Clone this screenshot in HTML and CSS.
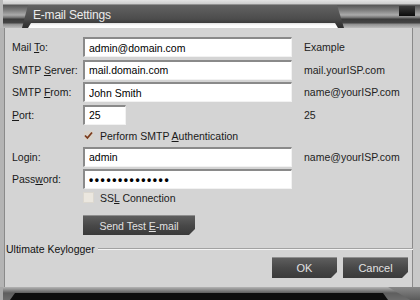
FILE: index.html
```html
<!DOCTYPE html>
<html lang="en">
<head>
    <meta charset="UTF-8">
    <title>E-mail Settings</title>
    <link rel="stylesheet" href="styles.css">
</head>
<body>
    <div class="window">

        <!-- Title bar with the dark tab -->
        <div class="titlebar">
            <div class="tb-left"></div>
            <div class="tab">
                <div class="tab-title">E-mail Settings</div>
                <div class="tab-edge"></div>
            </div>
            <div class="tb-right"><div class="tb-knob"></div></div>
        </div>

        <div class="content">
            <div class="form">
                <label for="mailTo">Mail <u>T</u>o:</label>
                <input class="field" id="mailTo" type="text" value="admin@domain.com">
                <span class="hint">Example</span>

                <label for="smtpServer">SMTP <u>S</u>erver:</label>
                <input class="field" id="smtpServer" type="text" value="mail.domain.com">
                <span class="hint">mail.yourISP.com</span>

                <label for="smtpFrom">SMTP <u>F</u>rom:</label>
                <input class="field" id="smtpFrom" type="text" value="John Smith">
                <span class="hint">name@yourISP.com</span>

                <label for="port"><u>P</u>ort:</label>
                <input class="field port" id="port" type="text" value="25">
                <span class="hint">25</span>

                <div class="check-row">
                    <span class="check checked">
                        <svg width="9" height="9" viewBox="0 0 9 9"><path d="M1 4.5 L3.4 7 L8 1.5" fill="none" stroke="#7a3a1c" stroke-width="1.8"/></svg>
                    </span>
                    <span>Perform SMTP <u>A</u>uthentication</span>
                </div>

                <label for="login">Lo<u>g</u>in:</label>
                <input class="field" id="login" type="text" value="admin">
                <span class="hint">name@yourISP.com</span>

                <label for="password">Pass<u>w</u>ord:</label>
                <input class="field pass" id="password" type="password" value="12345678901234">
                <span></span>

                <div class="check-row">
                    <span class="check"></span>
                    <span>SS<u>L</u> Connection</span>
                </div>

                <div class="test-row">
                    <button class="dark-btn test-btn">Send Test <u>E</u>-mail</button>
                </div>
            </div>

            <div class="group">
                <span>Ultimate Keylogger</span>
                <div class="rule"></div>
            </div>

            <div class="actions">
                <button class="dark-btn action-btn">OK</button>
                <button class="dark-btn action-btn">Cancel</button>
            </div>
        </div>

        <!-- Bottom frame -->
        <div class="bottom-frame">
            <div class="bottom-bar"></div>
            <div class="bottom-corner"></div>
        </div>

    </div>
</body>
</html>
```

FILE: styles.css
```css
* {
    margin: 0;
    padding: 0;
    box-sizing: border-box;
}

body {
    font-family: 'Liberation Sans', Arial, sans-serif;
    font-size: 10.5px;
    color: #1a1a1a;
    background-color: #d4d4d4;
}

.window {
    width: 420px;
    height: 300px;
    display: flex;
    flex-direction: column;
    overflow: hidden;
}

/* Title bar */
.titlebar {
    height: 28px;
    display: flex;
    background: linear-gradient(to bottom, #e4e4e4 0, #cdcdcd 4px, #555 5px, #7c7c7c 10px, #ababab 15px, #6a6a6a 18px, #3a3a3a 19px, #454545 23px, #8c8c8c 24px, #bdbdbd 28px);
}

.tb-left {
    width: 22px;
    border-left: 3px solid #b9b9b9;
}

.tab {
    width: 322px;
    margin-top: 5px;
    display: flex;
    flex-direction: column;
    background: linear-gradient(to bottom, #626262, #4c4c4c 14px, #3b3b3b 18px, #2e2e2e);
    clip-path: polygon(6px 0, calc(100% - 7px) 0, 100% 100%, 0 100%);
}

.tab-title {
    height: 18px;
    padding-left: 11px;
    padding-top: 3px;
    font-size: 12px;
    letter-spacing: -0.2px;
    color: #ececec;
}

.tab-edge {
    height: 5px;
    margin: 0 6px 0 6px;
    background: linear-gradient(to bottom, #dedede, #fafafa 2px, #ffffff);
    clip-path: polygon(3px 0, calc(100% - 3px) 0, 100% 100%, 0 100%);
}

.tb-right {
    flex: 1;
    display: flex;
    justify-content: flex-end;
}

.tb-knob {
    width: 16px;
    height: 10px;
    margin-top: 6px;
    margin-right: 5px;
    background: linear-gradient(to bottom, #3a3a3a, #0c0c0c);
}

/* Main panel */
.content {
    flex: 1;
    display: flex;
    flex-direction: column;
    padding: 9px 0 0 8px;
    border-left: 4px solid #b4b4b4;
    border-right: 7px solid #c9c9c9;
    box-shadow: inset 1px 0 0 #8a8a8a, inset -1px 0 0 #8a8a8a;
}

.form {
    display: grid;
    grid-template-columns: 71px 209px auto;
    grid-template-rows: 20px 20px 20px 20px 17px 20px 20px 12px 29px;
    row-gap: 2.5px;
    align-items: center;
}

.field {
    height: 20px;
    width: 209px;
    padding: 0 4px;
    font-family: inherit;
    font-size: 10.5px;
    color: #000;
    background-color: #fff;
    border-top: 2px solid #8a8a8a;
    border-left: 2px solid #8a8a8a;
    border-right: 1px solid #f2f2f2;
    border-bottom: 1px solid #f2f2f2;
    outline: none;
}

.field.port {
    width: 43px;
}

.field.pass {
    font-size: 12px;
    letter-spacing: 1.6px;
    font-weight: bold;
}

.hint {
    margin-left: 12px;
    color: #222;
}

.check-row {
    grid-column: 2 / 4;
    display: flex;
    align-items: center;
    gap: 6px;
}

.check {
    width: 11px;
    height: 11px;
    display: flex;
    align-items: center;
    justify-content: center;
    background-color: #ebe7df;
    border: 1px solid #dcd8d0;
}

.check.checked {
    background-color: #d8d4cc;
    border-color: #d4d4d4;
}

.test-row {
    grid-column: 2;
    align-self: end;
}

.dark-btn {
    display: block;
    font-family: inherit;
    font-size: 10.5px;
    color: #e2e2e2;
    background: linear-gradient(to bottom, #5e5e5e, #484848 50%, #3a3a3a);
    border: none;
    border-top: 1px solid #8e8e8e;
    clip-path: polygon(0 0, 100% 0, 100% calc(100% - 6px), calc(100% - 6px) 100%, 0 100%);
}

.test-btn {
    width: 112px;
    height: 20px;
}

.group {
    display: flex;
    align-items: center;
    margin: 8px 0 0 -6px;
    height: 12px;
    color: #111;
}

.rule {
    flex: 1;
    height: 2px;
    margin-left: 3px;
    border-top: 1px solid #a2a2a2;
    border-bottom: 1px solid #f4f4f4;
}

.actions {
    display: flex;
    justify-content: flex-end;
    gap: 6px;
    margin-top: 2px;
    padding-right: 5px;
}

.action-btn {
    width: 65px;
    height: 21px;
    font-size: 11px;
}

/* Bottom frame */
.bottom-frame {
    height: 13px;
    display: flex;
    align-items: flex-end;
    background: linear-gradient(to bottom, #b4b4b4, #8a8a8a 3px, #5e5e5e 6px, #6c6c6c);
    border-left: 3px solid #a8a8a8;
}

.bottom-bar {
    width: 378px;
    height: 7px;
    margin-left: 7px;
    background-color: #0e0e0e;
    clip-path: polygon(5px 0, calc(100% - 5px) 0, 100% 100%, 0 100%);
}

.bottom-corner {
    flex: 1;
    align-self: stretch;
    background: linear-gradient(to bottom, #888, #5a5a5a);
    clip-path: polygon(0 0, 100% 0, 100% 100%, 70% 100%);
}
```
